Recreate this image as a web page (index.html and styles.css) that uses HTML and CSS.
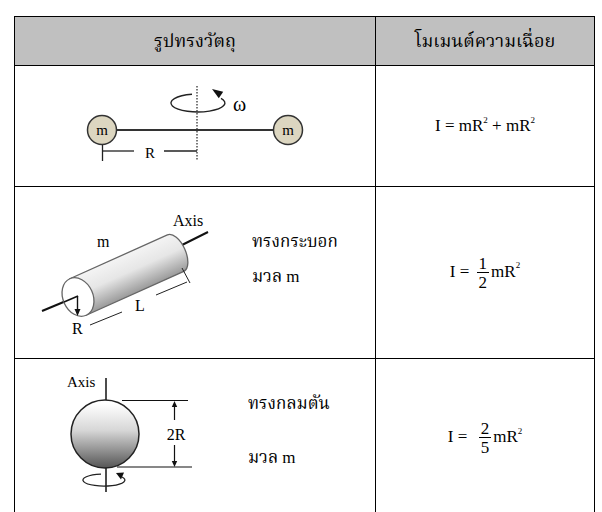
FILE: index.html
```html
<!DOCTYPE html>
<html lang="th">
<head>
<meta charset="utf-8">
<link rel="stylesheet" href="styles.css">
</head>
<body>
<div class="sheet">
  <div class="cell head">รูปทรงวัตถุ</div>
  <div class="cell head">โมเมนต์ความเฉื่อย</div>

  <div class="cell shape r1">
    <svg class="dia1" width="361" height="121" viewBox="15 67 361 121">
      <line x1="117" y1="131" x2="273" y2="131" stroke="#333" stroke-width="2"/>
      <line x1="197" y1="87" x2="197" y2="162" stroke="#333" stroke-width="1.3" stroke-dasharray="1.6 1.4"/>
      <path d="M192 95.2 A27 9 0 1 0 221 99.3" fill="none" stroke="#222" stroke-width="1.4"/>
      <polygon points="212,90 223.2,92.7 218.8,99.3" fill="#111"/>
      <text x="233" y="112" class="svgt" font-size="20">ω</text>
      <circle cx="102" cy="131" r="14.5" fill="#dcd6c0" stroke="#333" stroke-width="1.5"/>
      <circle cx="288" cy="131" r="14.5" fill="#dcd6c0" stroke="#333" stroke-width="1.5"/>
      <text x="102" y="136" class="svgt" font-size="15" text-anchor="middle">m</text>
      <text x="288" y="136" class="svgt" font-size="15" text-anchor="middle">m</text>
      <line x1="102.5" y1="146" x2="102.5" y2="162" stroke="#222" stroke-width="1.3"/>
      <line x1="102.5" y1="152" x2="134" y2="152" stroke="#222" stroke-width="1.3"/>
      <line x1="164" y1="152" x2="197" y2="152" stroke="#222" stroke-width="1.3"/>
      <text x="150" y="158.5" class="svgt" font-size="15" text-anchor="middle">R</text>
    </svg>
  </div>
  <div class="cell formula">
    <span class="eq">I = mR<sup>2</sup> + mR<sup>2</sup></span>
  </div>

  <div class="cell shape r2">
    <svg class="dia" width="215" height="172" viewBox="15 189 215 172">
      <defs>
        <linearGradient id="cyl" x1="0" y1="0" x2="0" y2="1">
          <stop offset="0" stop-color="#f4f4f4"/>
          <stop offset="0.45" stop-color="#e6e6e6"/>
          <stop offset="1" stop-color="#9a9a9a"/>
        </linearGradient>
      </defs>
      <line x1="42" y1="313" x2="78" y2="298" stroke="#111" stroke-width="2"/>
      <line x1="182" y1="247" x2="208" y2="234" stroke="#111" stroke-width="2"/>
      <g transform="translate(78 299) rotate(-24.2)">
        <path d="M0 -20 L107 -20 A10 20 0 0 1 107 20 L0 20 Z" fill="url(#cyl)" stroke="#666" stroke-width="1.3"/>
        <ellipse cx="0" cy="0" rx="15" ry="20" fill="#fff" stroke="#666" stroke-width="1.3"/>
      </g>
      <line x1="64" y1="304" x2="78" y2="298" stroke="#111" stroke-width="1.6"/>
      <line x1="77.5" y1="298" x2="77.5" y2="313" stroke="#111" stroke-width="1.4"/>
      <polygon points="74.5,311 80.5,311 77.5,318" fill="#111"/>
      <line x1="90" y1="327" x2="122" y2="314" stroke="#222" stroke-width="1"/>
      <line x1="156" y1="297" x2="187" y2="284" stroke="#222" stroke-width="1"/>
      <line x1="182" y1="270" x2="190" y2="285" stroke="#222" stroke-width="1"/>
      <text x="173" y="228" class="svgt" font-size="16">Axis</text>
      <text x="97" y="249" class="svgt" font-size="16">m</text>
      <text x="135" y="313" class="svgt" font-size="16">L</text>
      <text x="72" y="336" class="svgt" font-size="16">R</text>
    </svg>
    <div class="labels l2">
      <span>ทรงกระบอก</span>
      <span>มวล m</span>
    </div>
  </div>
  <div class="cell formula">
    <span class="eq">I = <span class="frac"><span class="num">1</span><span class="den">2</span></span>mR<sup>2</sup></span>
  </div>

  <div class="cell shape r3">
    <svg class="dia" width="215" height="159" viewBox="15 362 215 159">
      <defs>
        <linearGradient id="sph" x1="0" y1="0" x2="0" y2="1">
          <stop offset="0.05" stop-color="#ffffff"/>
          <stop offset="0.45" stop-color="#d6d6d6"/>
          <stop offset="1" stop-color="#555"/>
        </linearGradient>
      </defs>
      <line x1="106" y1="381" x2="106" y2="403" stroke="#111" stroke-width="1.5"/>
      <line x1="106" y1="471" x2="106" y2="495" stroke="#111" stroke-width="1.5"/>
      <circle cx="105" cy="437" r="34" fill="url(#sph)" stroke="#222" stroke-width="1.5"/>
      <text x="67" y="390" class="svgt" font-size="15">Axis</text>
      <line x1="122" y1="403.5" x2="188" y2="403.5" stroke="#111" stroke-width="1.2"/>
      <line x1="117" y1="470" x2="192" y2="470" stroke="#111" stroke-width="1.2"/>
      <polygon points="174.5,404 171.8,410 177.2,410" fill="#111"/>
      <line x1="174.5" y1="408" x2="174.5" y2="423" stroke="#111" stroke-width="1.2"/>
      <text x="176" y="443" class="svgt" font-size="16" text-anchor="middle">2R</text>
      <line x1="174.5" y1="448" x2="174.5" y2="465" stroke="#111" stroke-width="1.2"/>
      <polygon points="174.5,470 171.8,464 177.2,464" fill="#111"/>
      <path d="M101 477.1 A21 6 0 1 0 122 480" fill="none" stroke="#222" stroke-width="1.3"/>
      <polygon points="116,476 124,475.5 121,482.5" fill="#111"/>
    </svg>
    <div class="labels l3">
      <span>ทรงกลมตัน</span>
      <span>มวล m</span>
    </div>
  </div>
  <div class="cell formula">
    <span class="eq">I = &nbsp;<span class="frac f3"><span class="num">2</span><span class="den">5</span></span>mR<sup>2</sup></span>
  </div>
</div>
</body>
</html>
```
FILE: styles.css
```css
html, body {
  margin: 0;
  padding: 0;
  background: #fff;
}
body {
  font-family: "Liberation Serif", "Times New Roman", "Noto Serif Thai", "Noto Sans Thai", "Loma", "Garuda", "DejaVu Serif", serif;
  color: #000;
}
.sheet {
  display: grid;
  grid-template-columns: 361px 219px;
  grid-template-rows: 49px 121px 172px 159px;
  width: max-content;
  margin: 16px 0 0 14px;
  border-left: 1px solid #000;
  border-top: 1px solid #000;
}
.cell {
  border-right: 1px solid #000;
  border-bottom: 1px solid #000;
  overflow: hidden;
}
.head {
  background: #c0c0c0;
  display: flex;
  align-items: center;
  justify-content: center;
  font-size: 18px;
  padding-top: 2px;
}
.shape {
  display: flex;
  align-items: flex-start;
}
.dia1, .dia {
  display: block;
  flex: none;
}
.svgt {
  font-family: "Liberation Serif", "Times New Roman", "DejaVu Serif", serif;
  fill: #000;
}
.labels {
  display: flex;
  flex-direction: column;
  font-size: 17px;
}
.l2 {
  padding: 42px 0 0 22px;
  gap: 8px;
}
.l3 {
  padding: 32px 0 0 18px;
  gap: 27px;
}
.formula {
  display: flex;
  align-items: center;
  justify-content: center;
}
.eq {
  font-family: "Liberation Serif", "Times New Roman", "DejaVu Serif", serif;
  font-size: 17px;
  line-height: 20px;
  white-space: pre;
}
.eq sup {
  font-size: 9px;
  line-height: 0;
  vertical-align: 0;
  position: relative;
  top: -8px;
}
.frac {
  display: inline-block;
  vertical-align: middle;
  text-align: center;
  line-height: 17px;
  margin: 0 2px 0 3px;
}
.frac .num, .frac .den {
  display: block;
}
.frac .den {
  border-top: 1px solid #000;
  padding: 1px 2px 0;
}
```
